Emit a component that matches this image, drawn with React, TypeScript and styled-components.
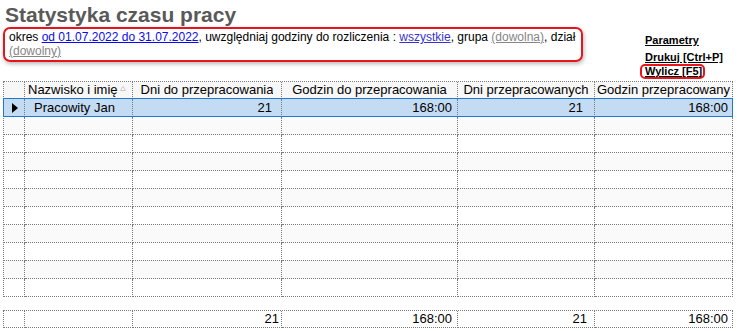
import React from "react";
import styled, { createGlobalStyle, css } from "styled-components";

const GlobalStyle = createGlobalStyle`
  html, body { margin: 0; padding: 0; background: #ffffff; }
  body { font-family: "Liberation Sans", Arial, sans-serif; color: #000; }
`;

const Page = styled.div`
  width: 737px;
  height: 331px;
  overflow: hidden;
`;

const TopBar = styled.div`
  display: flex;
  align-items: flex-start;
  height: 81px;
`;

const LeftPane = styled.div`
  width: 580px;
  margin-left: 3px;
`;

const Title = styled.h1`
  margin: 3px 0 0 2px;
  font-size: 21px;
  line-height: 24px;
  font-weight: bold;
  color: #595959;
`;

const InfoBox = styled.div`
  box-sizing: border-box;
  width: 580px;
  border: 2px solid #e8141c;
  border-radius: 7px;
  padding: 1px 2px 2px 4px;
  font-size: 12px;
  line-height: 14px;
  box-shadow: 1px 2px 4px rgba(0, 0, 0, 0.28);
`;

type Tone = "blue" | "indigo" | "gray";
const toneColor: Record<Tone, string> = {
  blue: "#0a0aee",
  indigo: "#3a32cc",
  gray: "#858585",
};

const TextLink = styled.span<{ $tone: Tone }>`
  color: ${(p) => toneColor[p.$tone]};
  text-decoration: underline;
  cursor: pointer;
`;

const LinkColumn = styled.div`
  display: flex;
  flex-direction: column;
  align-items: flex-start;
  margin-left: 57px;
  padding-top: 34px;
`;

const ActionLink = styled.span<{ $boxed?: boolean }>`
  font-size: 11px;
  font-weight: bold;
  text-decoration: underline;
  color: #000;
  line-height: 13px;
  padding-left: 5px;
  margin-bottom: 4px;
  ${(p) =>
    p.$boxed &&
    css`
      margin-bottom: 0;
      margin-top: -4px;
      line-height: 11px;
      padding: 0 1px 0 3px;
      border: 2px solid #e8141c;
      border-radius: 5px;
    `}
`;

const COLS = "21px 108px 149px 176px 137px 138px";
const DOT = "1px dotted #7a7a7a";

const Grid = styled.div<{ $gapTop?: number }>`
  margin-left: 3px;
  margin-top: ${(p) => p.$gapTop ?? 0}px;
  width: 730px;
  box-sizing: border-box;
  border-left: ${DOT};
  border-top: ${DOT};
`;

type RowKind = "header" | "selected" | "odd" | "even" | "footer";
const rowBg: Record<RowKind, string> = {
  header: "#f7f7f7",
  selected: "#c4dcf3",
  odd: "#fafafa",
  even: "#ffffff",
  footer: "#ffffff",
};

const Row = styled.div<{ $kind: RowKind }>`
  position: relative;
  display: grid;
  grid-template-columns: ${COLS};
  height: ${(p) => (p.$kind === "header" || p.$kind === "footer" ? 17 : 18)}px;
  background: ${(p) => rowBg[p.$kind]};
  font-size: 13px;
  ${(p) =>
    p.$kind === "selected" &&
    css`
      &::after {
        content: "";
        position: absolute;
        left: -1px;
        top: -1px;
        right: 0;
        bottom: 0;
        border: 1px solid #1f77cf;
        pointer-events: none;
      }
    `}
`;

const Cell = styled.div<{ $align?: "left" | "right" | "center"; $padL?: number; $padR?: number }>`
  box-sizing: border-box;
  border-right: ${DOT};
  border-bottom: ${DOT};
  overflow: hidden;
  white-space: nowrap;
  display: flex;
  align-items: center;
  justify-content: ${(p) =>
    p.$align === "right" ? "flex-end" : p.$align === "center" ? "center" : "flex-start"};
  padding-left: ${(p) => p.$padL ?? 2}px;
  padding-right: ${(p) => p.$padR ?? 2}px;
  line-height: 16px;
`;

const HeadText = styled.span`
  display: block;
  overflow: hidden;
`;

const SortMark = styled.svg`
  flex: none;
  margin-left: 2px;
  margin-top: -3px;
`;

const RowPointer = styled.svg`
  margin-left: 6px;
`;

const headers = [
  "Dni do przepracowania",
  "Godzin do przepracowania",
  "Dni przepracowanych",
  "Godzin przepracowanych",
];

const numPad = [9, 5, 11, 4];
const footPad = [2, 5, 7, 4];

export default function App() {
  const blanks = Array.from({ length: 10 }, (_, i) => i);
  const values = ["21", "168:00", "21", "168:00"];
  return (
    <Page>
      <GlobalStyle />
      <TopBar>
        <LeftPane>
          <Title>Statystyka czasu pracy</Title>
          <InfoBox>
            okres <TextLink $tone="blue">od 01.07.2022 do 31.07.2022</TextLink>, uwzględniaj
            godziny do rozliczenia : <TextLink $tone="indigo">wszystkie</TextLink>, grupa{" "}
            <TextLink $tone="gray">(dowolna)</TextLink>, dział{" "}
            <TextLink $tone="gray">(dowolny)</TextLink>
          </InfoBox>
        </LeftPane>
        <LinkColumn>
          <ActionLink>Parametry</ActionLink>
          <ActionLink>Drukuj [Ctrl+P]</ActionLink>
          <ActionLink $boxed>Wylicz [F5]</ActionLink>
        </LinkColumn>
      </TopBar>

      <Grid>
        <Row $kind="header">
          <Cell />
          <Cell $padL={3}>
            <HeadText>Nazwisko i imię</HeadText>
            <SortMark width="6" height="5" viewBox="0 0 6 5">
              <polygon points="3,0.5 5.5,4.5 0.5,4.5" fill="#ffffff" stroke="#c8c8c8" strokeWidth="1" />
            </SortMark>
          </Cell>
          {headers.map((h) => (
            <Cell key={h} $align="center">
              <HeadText>{h}</HeadText>
            </Cell>
          ))}
        </Row>
        <Row $kind="selected">
          <Cell>
            <RowPointer width="6" height="10" viewBox="0 0 6 10">
              <polygon points="0,0 6,5 0,10" fill="#000" />
            </RowPointer>
          </Cell>
          <Cell $padL={9}>Pracowity Jan</Cell>
          {values.map((v, i) => (
            <Cell key={i} $align="right" $padR={numPad[i]}>
              {v}
            </Cell>
          ))}
        </Row>
        {blanks.map((i) => (
          <Row key={i} $kind={i % 2 === 0 ? "odd" : "even"}>
            <Cell />
            <Cell />
            <Cell />
            <Cell />
            <Cell />
            <Cell />
          </Row>
        ))}
      </Grid>

      <Grid $gapTop={13}>
        <Row $kind="footer">
          <Cell />
          <Cell />
          {values.map((v, i) => (
            <Cell key={i} $align="right" $padR={footPad[i]}>
              {v}
            </Cell>
          ))}
        </Row>
      </Grid>
    </Page>
  );
}
